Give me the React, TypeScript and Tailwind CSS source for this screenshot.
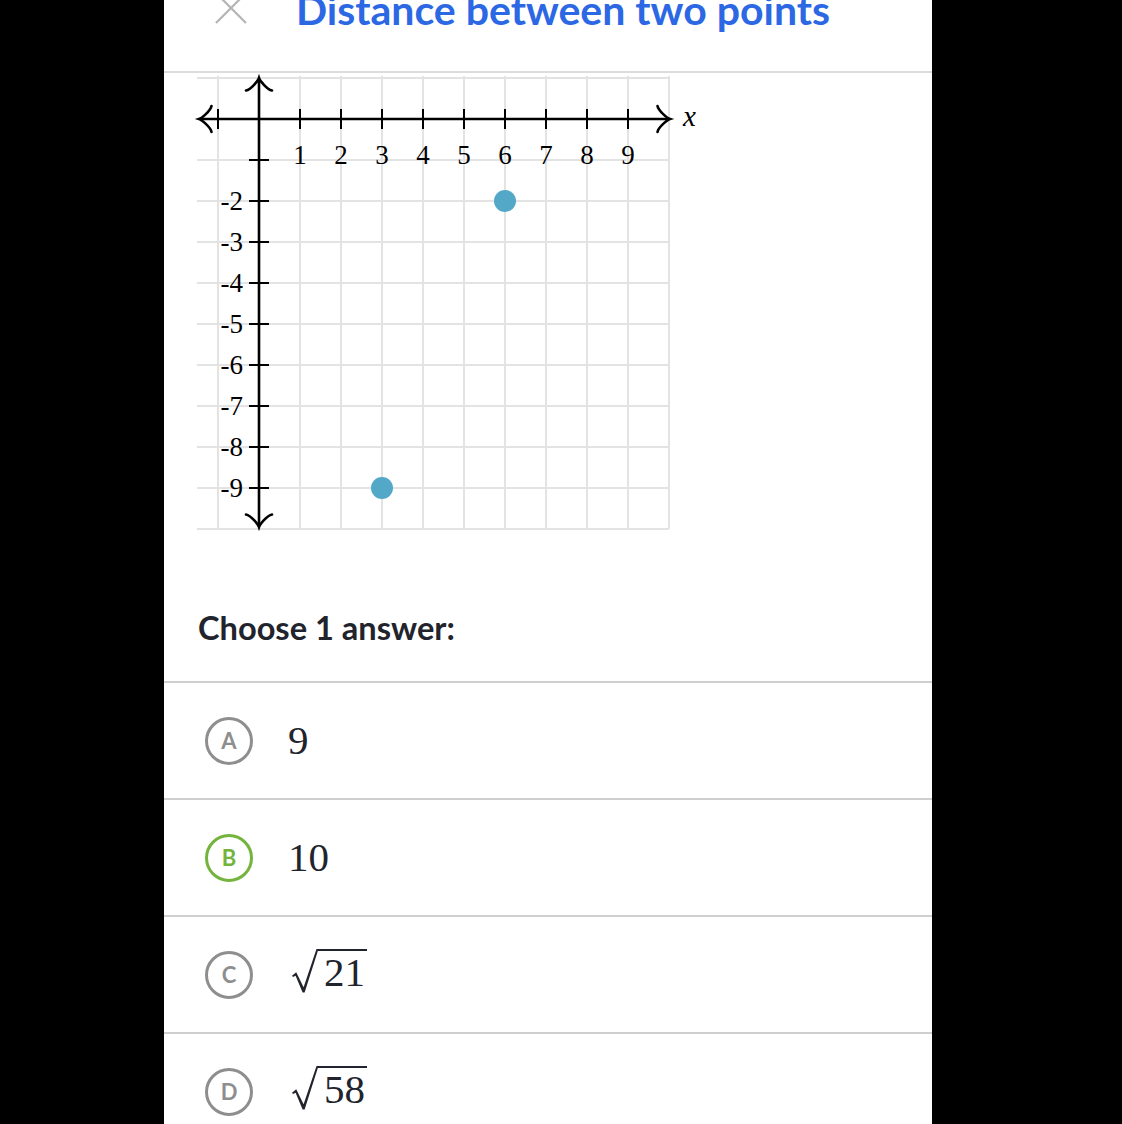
import React from "react";

const U = 41;
const OX = 69;
const OY = 46;
const X = (x: number) => OX + U * x;
const Y = (y: number) => OY - U * y;

const ARROW = "M -12.5 13 C -11.5 8 -2.5 0.8 0 0 C -2.5 -0.8 -11.5 -8 -12.5 -13";

function Graph() {
  const vx = Array.from({ length: 12 }, (_, i) => i - 1);
  const hy = Array.from({ length: 12 }, (_, i) => 1 - i);
  const serif = "'Liberation Serif', 'Times New Roman', serif";
  return (
    <svg width={540} height={462} className="block ml-[26px]" viewBox="0 0 540 462">
      {vx.map((x) => (
        <line key={"v" + x} x1={X(x)} x2={X(x)} y1={Y(1) - 2} y2={Y(-10)} stroke="#e3e3e3" strokeWidth={2} />
      ))}
      {hy.map((y) => (
        <line key={"h" + y} x1={7} x2={X(10)} y1={Y(y)} y2={Y(y)} stroke="#e3e3e3" strokeWidth={2} />
      ))}
      {/* axes */}
      <line x1={11} x2={478} y1={Y(0)} y2={Y(0)} stroke="#000" strokeWidth={2.6} />
      <line x1={X(0)} x2={X(0)} y1={7} y2={452} stroke="#000" strokeWidth={2.6} />
      <path d={ARROW} transform={`translate(480 ${Y(0)})`} fill="none" stroke="#000" strokeWidth={2.6} strokeLinecap="round" />
      <path d={ARROW} transform={`translate(9 ${Y(0)}) rotate(180)`} fill="none" stroke="#000" strokeWidth={2.6} strokeLinecap="round" />
      <path d={ARROW} transform={`translate(${X(0)} 5) rotate(-90)`} fill="none" stroke="#000" strokeWidth={2.6} strokeLinecap="round" />
      <path d={ARROW} transform={`translate(${X(0)} 454) rotate(90)`} fill="none" stroke="#000" strokeWidth={2.6} strokeLinecap="round" />
      {/* ticks */}
      {[-1, 1, 2, 3, 4, 5, 6, 7, 8, 9].map((x) => (
        <line key={"tx" + x} x1={X(x)} x2={X(x)} y1={Y(0) - 10} y2={Y(0) + 10} stroke="#000" strokeWidth={2} />
      ))}
      {[-1, -2, -3, -4, -5, -6, -7, -8, -9].map((y) => (
        <line key={"ty" + y} x1={X(0) - 10} x2={X(0) + 10} y1={Y(y)} y2={Y(y)} stroke="#000" strokeWidth={2} />
      ))}
      {/* labels */}
      {[1, 2, 3, 4, 5, 6, 7, 8, 9].map((x) => (
        <text key={"lx" + x} x={X(x)} y={Y(0) + 45} textAnchor="middle" fontFamily={serif} fontSize={27} fill="#000">
          {x}
        </text>
      ))}
      {[-2, -3, -4, -5, -6, -7, -8, -9].map((y) => (
        <text key={"ly" + y} x={53} y={Y(y) + 9} textAnchor="end" fontFamily={serif} fontSize={27} fill="#000">
          {"-" + Math.abs(y)}
        </text>
      ))}
      <text x={493} y={Y(0) + 7} fontFamily={serif} fontStyle="italic" fontSize={29} fill="#000">
        x
      </text>
      {/* points */}
      <circle cx={X(6)} cy={Y(-2)} r={11} fill="#53a8c8" />
      <circle cx={X(3)} cy={Y(-9)} r={11} fill="#53a8c8" />
    </svg>
  );
}

function Radical() {
  return (
    <svg width={26} height={44} viewBox="0 0 26 44" className="block shrink-0">
      <path
        d="M0 26.8 L4.2 23.2 L11.6 38.2 L24.5 0 L26 0 L26 1.6 L12.6 43.6 L10.6 43.6 L3.6 26.8 L1 28 Z"
        fill="#21242c"
      />
    </svg>
  );
}

function Sqrt({ n }: { n: string }) {
  return (
    <span className="flex items-start mb-[8px] ml-[4px]">
      <Radical />
      <span className="border-t-[2px] border-[#21242c] pl-[6px] pr-[2px] pt-[1px] text-[41px] leading-[41px]">{n}</span>
    </span>
  );
}

function Choice({
  letter,
  selected,
  children,
}: {
  letter: string;
  selected?: boolean;
  children: React.ReactNode;
}) {
  return (
    <div className="h-[117px] border-t-2 border-[#cfcfcf] flex items-center pl-[41px]">
      <div
        className={
          selected
            ? "w-[48px] h-[48px] rounded-full border-[3px] border-[#74b43c] flex items-center justify-center text-[#74b43c]"
            : "w-[48px] h-[48px] rounded-full border-[3px] border-[#8e8e8e] flex items-center justify-center text-[#8e8e8e]"
        }
      >
        <span className="text-[22px] font-bold leading-none" style={{ fontFamily: "Lato, 'Open Sans', sans-serif" }}>
          {letter}
        </span>
      </div>
      <div
        className="ml-[35px] text-[41px] leading-none text-[#21242c]"
        style={{ fontFamily: "'Liberation Serif', 'Times New Roman', serif" }}
      >
        {children}
      </div>
    </div>
  );
}

export default function App() {
  return (
    <div className="w-[1122px] h-[1124px] bg-black overflow-hidden">
      <div className="ml-[164px] w-[768px] h-[1124px] bg-white overflow-hidden">
        <div className="h-[73px] border-b-2 border-[#dcdcdc] flex items-start overflow-hidden">
          <svg width={34} height={34} viewBox="0 0 34 34" className="block ml-[50px] mt-[-9px] shrink-0">
            <line x1={2} y1={2} x2={32} y2={32} stroke="#b5b5b5" strokeWidth={2.2} />
            <line x1={32} y1={2} x2={2} y2={32} stroke="#b5b5b5" strokeWidth={2.2} />
          </svg>
          <div
            className="ml-[48px] mt-[-11px] text-[41px] leading-[41px] font-bold text-[#2c67e4] whitespace-nowrap"
            style={{ fontFamily: "Lato, 'Open Sans', sans-serif" }}
          >
            Distance between two points
          </div>
        </div>
        <Graph />
        <div
          className="mt-[76px] ml-[34px] text-[32.6px] leading-[33px] font-bold text-[#21242c]"
          style={{ fontFamily: "Lato, 'Open Sans', sans-serif" }}
        >
          Choose 1 answer:
        </div>
        <div className="mt-[37px]">
          <Choice letter="A">9</Choice>
          <Choice letter="B" selected>
            10
          </Choice>
          <Choice letter="C">
            <Sqrt n="21" />
          </Choice>
          <Choice letter="D">
            <Sqrt n="58" />
          </Choice>
        </div>
      </div>
    </div>
  );
}
